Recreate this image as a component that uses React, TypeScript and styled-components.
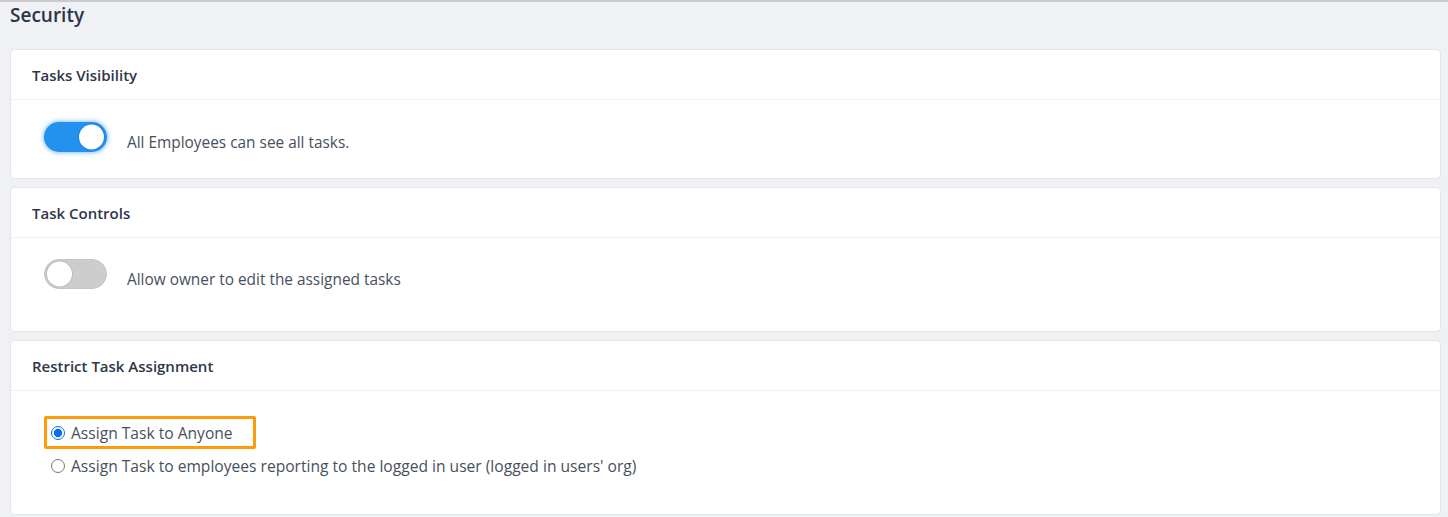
import React, { useState } from "react";
import styled, { createGlobalStyle, css } from "styled-components";

const GlobalStyle = createGlobalStyle`
  html, body { margin: 0; padding: 0; }
  body {
    background: #eff1f5;
    font-family: "Open Sans", "Noto Sans", sans-serif;
    color: #4a5262;
  }
`;

const Page = styled.div`
  border-top: 2px solid #c9cbcf;
  padding: 0 8px 4px 11px;
  min-height: 515px;
  box-sizing: border-box;
`;

const PageTitle = styled.h1`
  margin: 0 0 0 -1px;
  height: 48px;
  padding-top: 1px;
  box-sizing: border-box;
  font-size: 19px;
  font-weight: 600;
  line-height: 24px;
  color: #2c3447;
`;

const Stack = styled.div`
  display: flex;
  flex-direction: column;
  gap: 10px;
`;

const Card = styled.section`
  background: #ffffff;
  border-radius: 4px;
  box-shadow: 0 0 0 1px #e4e6ea, 0 1px 2px rgba(0, 0, 0, 0.04);
`;

const CardHeader = styled.div`
  height: 49px;
  display: flex;
  align-items: center;
  padding: 0 21px;
  border-bottom: 1px solid #f1f2f4;
  font-size: 15px;
  font-weight: 600;
  color: #2e3649;
`;

const CardBody = styled.div<{ $padTop: number; $padBottom: number }>`
  padding: ${(p) => p.$padTop}px 21px ${(p) => p.$padBottom}px 33px;
`;

const ToggleRow = styled.label`
  display: flex;
  align-items: flex-end;
  gap: 20px;
  cursor: pointer;
`;

const Track = styled.span<{ $on: boolean }>`
  position: relative;
  width: 63px;
  height: 30px;
  border-radius: 15px;
  box-sizing: border-box;
  flex: none;
  ${(p) =>
    p.$on
      ? css`
          background: #2391ee;
          box-shadow: 0 0 4px 1px rgba(35, 145, 238, 0.55);
        `
      : css`
          background: #cdcdcd;
          border: 1px solid #c4c4c4;
        `}
`;

const Thumb = styled.span<{ $on: boolean }>`
  position: absolute;
  top: 50%;
  width: 25px;
  height: 25px;
  border-radius: 50%;
  background: #ffffff;
  transform: translateY(-50%);
  ${(p) =>
    p.$on
      ? css`
          right: 3px;
          box-shadow: 0 0 0 1px rgba(20, 110, 200, 0.35);
        `
      : css`
          left: 2px;
          box-shadow: 0 0 0 1px rgba(0, 0, 0, 0.08);
        `}
`;

const ToggleLabel = styled.span`
  font-size: 15.4px;
  line-height: 20px;
  color: #474f60;
  margin-bottom: -1px;
`;

const RadioList = styled.div`
  display: flex;
  flex-direction: column;
`;

const RadioRow = styled.label<{ $highlight?: boolean }>`
  display: inline-flex;
  align-items: center;
  gap: 4px;
  align-self: flex-start;
  height: 33px;
  box-sizing: border-box;
  padding: 0 20px 0 4px;
  font-size: 15.6px;
  color: #474f60;
  cursor: pointer;
  border: 3px solid ${(p) => (p.$highlight ? "#ff9a0a" : "transparent")};
  border-radius: 2px;
`;

const RadioInput = styled.input`
  width: 14px;
  height: 14px;
  margin: 0 2px 0 0;
  accent-color: #0a6cf0;
`;

export default function App() {
  const [visible, setVisible] = useState(true);
  const [owner, setOwner] = useState(false);
  const [assign, setAssign] = useState("anyone");

  return (
    <>
      <GlobalStyle />
      <Page>
        <PageTitle>Security</PageTitle>
        <Stack>
          <Card>
            <CardHeader>Tasks Visibility</CardHeader>
            <CardBody $padTop={22} $padBottom={26}>
              <ToggleRow onClick={() => setVisible(!visible)}>
                <Track $on={visible}>
                  <Thumb $on={visible} />
                </Track>
                <ToggleLabel>All Employees can see all tasks.</ToggleLabel>
              </ToggleRow>
            </CardBody>
          </Card>
          <Card>
            <CardHeader>Task Controls</CardHeader>
            <CardBody $padTop={21} $padBottom={42}>
              <ToggleRow onClick={() => setOwner(!owner)}>
                <Track $on={owner}>
                  <Thumb $on={owner} />
                </Track>
                <ToggleLabel>Allow owner to edit the assigned tasks</ToggleLabel>
              </ToggleRow>
            </CardBody>
          </Card>
          <Card>
            <CardHeader>Restrict Task Assignment</CardHeader>
            <CardBody $padTop={25} $padBottom={32}>
              <RadioList>
                <RadioRow $highlight>
                  <RadioInput
                    type="radio"
                    name="assign"
                    checked={assign === "anyone"}
                    onChange={() => setAssign("anyone")}
                  />
                  Assign Task to Anyone
                </RadioRow>
                <RadioRow>
                  <RadioInput
                    type="radio"
                    name="assign"
                    checked={assign === "reports"}
                    onChange={() => setAssign("reports")}
                  />
                  Assign Task to employees reporting to the logged in user (logged in users' org)
                </RadioRow>
              </RadioList>
            </CardBody>
          </Card>
        </Stack>
      </Page>
    </>
  );
}
